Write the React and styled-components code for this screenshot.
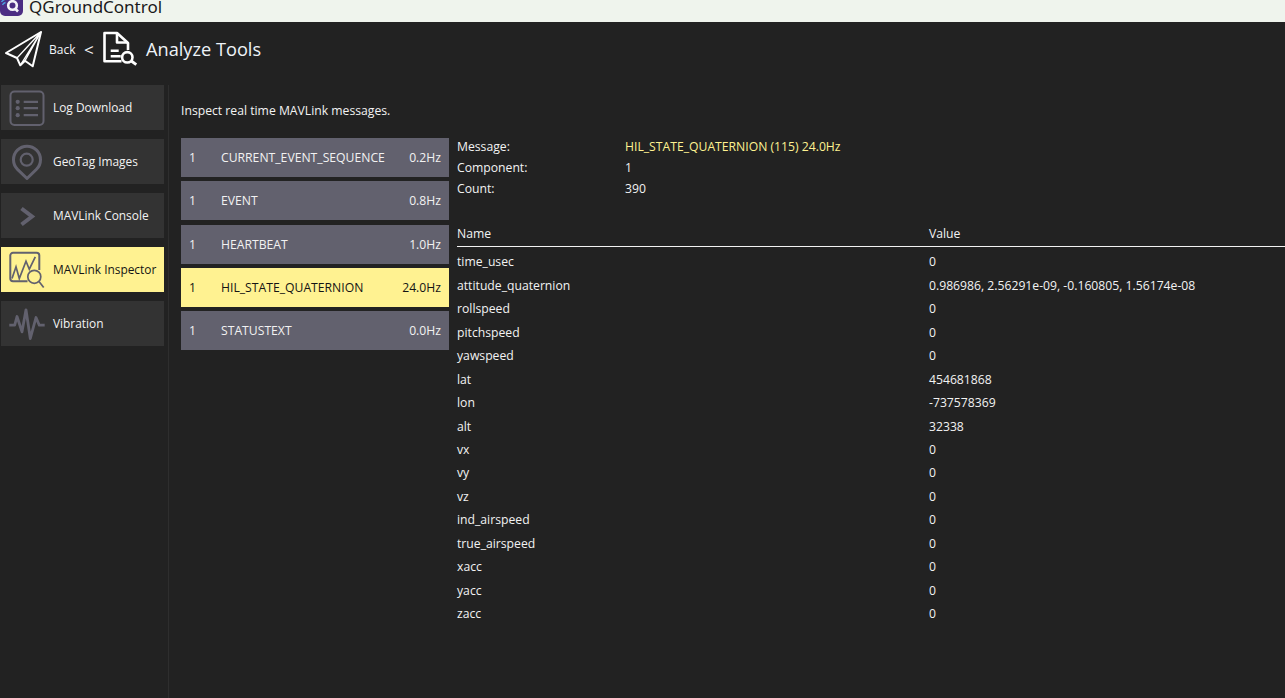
import React from "react";
import styled, { createGlobalStyle } from "styled-components";

const GlobalStyle = createGlobalStyle`
  html, body {
    margin: 0;
    padding: 0;
    height: 100%;
    overflow: hidden;
    background: #222222;
  }
  #root {
    height: 100%;
  }
`;

const Page = styled.div`
  display: flex;
  flex-direction: column;
  height: 698px;
  font-family: "Open Sans", "Noto Sans", sans-serif;
  font-size: 12.2px;
  color: #f2f2f2;
  background: #222222;
`;

const TitleBar = styled.div`
  display: flex;
  align-items: flex-end;
  height: 22px;
  flex: none;
  background: #eff4ed;
  overflow: hidden;
  color: #1a1a1a;
`;

const AppLogo = styled.svg`
  width: 23px;
  height: 23px;
  margin-bottom: 6px;
  flex: none;
`;

const AppTitle = styled.div`
  font-family: "Noto Sans", "Open Sans", sans-serif;
  font-size: 17px;
  line-height: 22px;
  margin-left: 6px;
  margin-bottom: 4px;
`;

const Header = styled.div`
  display: flex;
  align-items: center;
  height: 54px;
  margin-bottom: 9px;
  flex: none;
`;

const BackIcon = styled.svg`
  width: 38px;
  height: 38px;
  margin-left: 5px;
  flex: none;
`;

const BackLabel = styled.span`
  width: 27px;
  margin-left: 6px;
  font-size: 12px;
  color: #f2f6fa;
`;

const Chevron = styled.span`
  width: 10px;
  margin-left: 8px;
  font-size: 17px;
  color: #f2f2f2;
`;

const PageIcon = styled.svg`
  width: 36px;
  height: 36px;
  margin-left: 9px;
  flex: none;
`;

const PageTitle = styled.span`
  margin-left: 7px;
  font-size: 18.2px;
  color: #eef3f8;
`;

const Body = styled.div`
  display: flex;
  flex: 1;
  min-height: 0;
`;

const Sidebar = styled.div`
  display: flex;
  flex-direction: column;
  gap: 9px;
  width: 169px;
  flex: none;
  box-sizing: border-box;
  padding: 0 4px 0 1px;
  border-right: 1px solid #2e2e2e;
`;

const NavButton = styled.div`
  display: flex;
  align-items: center;
  height: 45px;
  font-size: 11.9px;
  background: ${(p) => (p.$active ? "#fff291" : "#333333")};
  color: ${(p) => (p.$active ? "#141414" : "#f2f2f2")};
`;

const NavIconSlot = styled.div`
  display: flex;
  justify-content: center;
  align-items: center;
  width: 52px;
  flex: none;
`;

const NavLabel = styled.span`
  margin-bottom: 1px;
`;

const Content = styled.div`
  flex: 1;
  min-width: 0;
  padding: 17px 0 0 12px;
`;

const Intro = styled.div`
  height: 36px;
  line-height: 18px;
`;

const Columns = styled.div`
  display: flex;
  gap: 8px;
`;

const MessageList = styled.div`
  display: flex;
  flex-direction: column;
  gap: 4.33px;
  width: 268px;
  flex: none;
`;

const MessageRow = styled.div`
  display: flex;
  align-items: center;
  height: 39px;
  padding: 0 8px;
  background: ${(p) => (p.$active ? "#fff291" : "#62616e")};
  color: ${(p) => (p.$active ? "#141414" : "#f2f2f2")};
`;

const MessageId = styled.span`
  width: 32px;
  flex: none;
`;

const MessageName = styled.span`
  flex: 1;
`;

const Detail = styled.div`
  flex: 1;
  min-width: 0;
`;

const SummaryGrid = styled.div`
  display: grid;
  grid-template-columns: 168px 1fr;
  grid-auto-rows: 21px;
  align-items: center;
  margin-top: -2px;
`;

const Highlight = styled.span`
  color: #fff291;
`;

const TableHead = styled.div`
  display: grid;
  grid-template-columns: 472px 1fr;
  align-items: center;
  height: 25px;
  margin-top: 22px;
  border-bottom: 1px solid #f2f2f2;
`;

const FieldTable = styled.div`
  display: grid;
  grid-template-columns: 472px 1fr;
  grid-auto-rows: 23.47px;
  align-items: center;
  margin-top: 3px;
`;

const ListIcon = () => (
  <svg width="36" height="36" viewBox="0 0 36 36" fill="none" stroke="#62616e" strokeWidth="2">
    <rect x="1.5" y="1.5" width="33" height="33.5" rx="4" />
    <path d="M14.7 11.8H29M14.7 18.2H29M14.7 25.2H29" strokeWidth="2.2" />
    <g fill="#62616e" stroke="none">
      <circle cx="8.7" cy="11.8" r="2.1" />
      <circle cx="8.7" cy="18.2" r="2.1" />
      <circle cx="8.7" cy="25.2" r="2.1" />
    </g>
  </svg>
);

const PinIcon = () => (
  <svg width="32" height="36" viewBox="0 0 32 36" fill="none" stroke="#62616e" strokeWidth="3">
    <path d="M16 34.5 L6.5 25.3 A13.5 13.5 0 1 1 25.5 25.3 Z" strokeLinejoin="round" />
    <circle cx="15.7" cy="15.7" r="6" strokeWidth="2.2" />
  </svg>
);

const ChevronIcon = () => (
  <svg width="18" height="22" viewBox="0 0 18 22" fill="none" stroke="#62616e" strokeWidth="4">
    <path d="M3.5 3.5 L14 11.5 L3.5 19.5" />
  </svg>
);

const InspectorIcon = () => (
  <svg width="38" height="38" viewBox="0 0 38 38" fill="none" stroke="#62616e" strokeWidth="1.7">
    <path d="M19.5 30.2H5a2.7 2.7 0 0 1-2.7-2.7V4.5A2.7 2.7 0 0 1 5 1.8h23.6a2.7 2.7 0 0 1 2.7 2.7V19" strokeWidth="2" />
    <path d="M4 27.5 L8 15.8 L11.3 27.5 L18 10.2 L21.3 18.2 L27.3 5.8" />
    <circle cx="26.3" cy="25.8" r="6.5" />
    <path d="M31 30.5 L35.7 36.5" />
  </svg>
);

const WaveIcon = () => (
  <svg width="38" height="32" viewBox="0 0 38 32" fill="none" stroke="#62616e" strokeWidth="2.8">
    <path d="M1.3 17.2 H6.7 L9 8.5 L14 23.8 L18 1.8 L22.3 30.5 L28 9.5 L31.3 17.2 H36.7" strokeLinejoin="round" />
  </svg>
);

const navItems = [
  { label: "Log Download", icon: <ListIcon /> },
  { label: "GeoTag Images", icon: <PinIcon /> },
  { label: "MAVLink Console", icon: <ChevronIcon /> },
  { label: "MAVLink Inspector", icon: <InspectorIcon />, active: true },
  { label: "Vibration", icon: <WaveIcon /> },
];

const messages = [
  { name: "CURRENT_EVENT_SEQUENCE", rate: "0.2Hz" },
  { name: "EVENT", rate: "0.8Hz" },
  { name: "HEARTBEAT", rate: "1.0Hz" },
  { name: "HIL_STATE_QUATERNION", rate: "24.0Hz", active: true },
  { name: "STATUSTEXT", rate: "0.0Hz" },
];

const fields = [
  ["time_usec", "0"],
  ["attitude_quaternion", "0.986986, 2.56291e-09, -0.160805, 1.56174e-08"],
  ["rollspeed", "0"],
  ["pitchspeed", "0"],
  ["yawspeed", "0"],
  ["lat", "454681868"],
  ["lon", "-737578369"],
  ["alt", "32338"],
  ["vx", "0"],
  ["vy", "0"],
  ["vz", "0"],
  ["ind_airspeed", "0"],
  ["true_airspeed", "0"],
  ["xacc", "0"],
  ["yacc", "0"],
  ["zacc", "0"],
];

export default function App() {
  return (
    <Page>
      <GlobalStyle />
      <TitleBar>
        <AppLogo viewBox="0 0 23 23">
          <rect width="23" height="23" rx="5" fill="#4b2d83" />
          <path d="M1.5 9a7 7 0 0 1 5-3M2.5 12a4 4 0 0 1 3-2.5" fill="none" stroke="#4ba0e0" strokeWidth="1.3" />
          <circle cx="12.5" cy="12.5" r="4.3" fill="none" stroke="#f4f4f8" strokeWidth="2.6" />
          <path d="M14.5 15l3.5 3.5" stroke="#f4f4f8" strokeWidth="2.6" />
        </AppLogo>
        <AppTitle>QGroundControl</AppTitle>
      </TitleBar>
      <Header>
        <BackIcon viewBox="0 0 38 38" fill="none" stroke="#fff" strokeWidth="2" strokeLinejoin="round">
          <path d="M36 2 L1 23 L12 28 L15.3 35.3 L20 30.7 L27.7 36.3 Z" />
          <path d="M36 2 L12 28 M36 2 L15.3 35.3 M36 2 L20 30.7" strokeWidth="1.3" />
        </BackIcon>
        <BackLabel>Back</BackLabel>
        <Chevron>&lt;</Chevron>
        <PageIcon viewBox="0 0 36 36" fill="none" stroke="#fff" strokeWidth="2.6" strokeLinejoin="round">
          <path d="M18.5 30.3H1.5V2H14L25 12V19" />
          <path d="M14 2V11.5H25" />
          <path d="M7.7 19.7H15.7M7.7 25.3H17.7" />
          <circle cx="24.3" cy="26.3" r="5.2" />
          <path d="M28.3 30 L33.3 33.7" strokeWidth="2.8" />
        </PageIcon>
        <PageTitle>Analyze Tools</PageTitle>
      </Header>
      <Body>
        <Sidebar>
          {navItems.map((item) => (
            <NavButton key={item.label} $active={item.active}>
              <NavIconSlot>{item.icon}</NavIconSlot>
              <NavLabel>{item.label}</NavLabel>
            </NavButton>
          ))}
        </Sidebar>
        <Content>
          <Intro>Inspect real time MAVLink messages.</Intro>
          <Columns>
            <MessageList>
              {messages.map((m) => (
                <MessageRow key={m.name} $active={m.active}>
                  <MessageId>1</MessageId>
                  <MessageName>{m.name}</MessageName>
                  <span>{m.rate}</span>
                </MessageRow>
              ))}
            </MessageList>
            <Detail>
              <SummaryGrid>
                <span>Message:</span>
                <Highlight>HIL_STATE_QUATERNION (115) 24.0Hz</Highlight>
                <span>Component:</span>
                <span>1</span>
                <span>Count:</span>
                <span>390</span>
              </SummaryGrid>
              <TableHead>
                <span>Name</span>
                <span>Value</span>
              </TableHead>
              <FieldTable>
                {fields.map(([name, value]) => (
                  <React.Fragment key={name}>
                    <span>{name}</span>
                    <span>{value}</span>
                  </React.Fragment>
                ))}
              </FieldTable>
            </Detail>
          </Columns>
        </Content>
      </Body>
    </Page>
  );
}
